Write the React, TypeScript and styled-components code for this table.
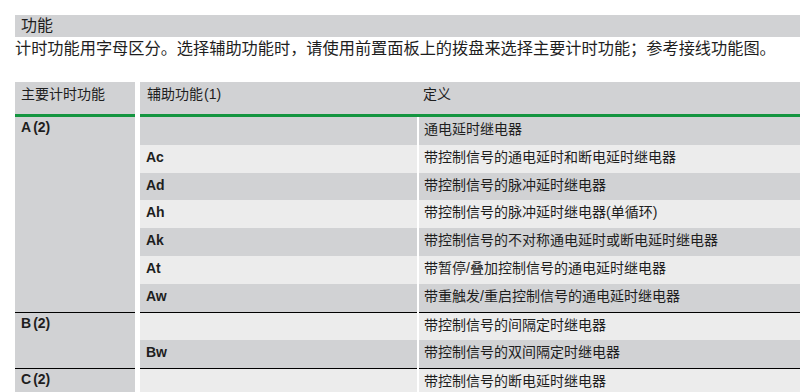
import React from 'react';
import styled, { createGlobalStyle } from 'styled-components';

const GlobalStyle = createGlobalStyle`
  html, body {
    margin: 0;
    padding: 0;
    background: #ffffff;
    overflow: hidden;
  }
  body {
    font-family: "Liberation Sans", "Noto Sans CJK SC", sans-serif;
    color: #1e1e1e;
  }
`;

const GRAY = '#d1d2d4';
const LIGHT = '#ececec';
const GREEN = '#149540';
const RULE = '#000000';

const Page = styled.div`
  padding: 15px 0 0 15px;
`;

const TitleBar = styled.div`
  background: ${GRAY};
  height: 22px;
  line-height: 22px;
  padding-left: 6px;
  font-size: 16px;
`;

const Intro = styled.p`
  margin: 0 0 23px;
  font-size: 16.2px;
  line-height: 22px;
  white-space: nowrap;
`;

const Table = styled.div`
  display: flex;
  flex-direction: column;
`;

const HeadRow = styled.div`
  display: flex;
  gap: 5px;
`;

const HeadMain = styled.div`
  flex: none;
  width: 120px;
  box-sizing: border-box;
  height: 35px;
  padding: 2px 0 0 6px;
  background: ${GRAY};
  border-bottom: 3px solid ${GREEN};
  font-size: 14px;
  line-height: 20px;
`;

const HeadRest = styled.div`
  flex: 1;
  display: grid;
  grid-template-columns: 277px 1fr;
  column-gap: 2px;
  box-sizing: border-box;
  height: 35px;
  padding-top: 2px;
  background: ${GRAY};
  border-bottom: 3px solid ${GREEN};
  font-size: 14px;
  line-height: 20px;
`;

const HeadLabel = styled.span<{ $pad: number }>`
  padding-left: ${(p) => p.$pad}px;
`;

const Note = styled.span`
  margin-left: 1px;
`;

const Group = styled.div`
  display: flex;
  gap: 5px;
`;

const MainCell = styled.div<{ $rule: boolean }>`
  flex: none;
  width: 120px;
  box-sizing: border-box;
  padding-left: 6px;
  background: ${GRAY};
  border-top: ${(p) => (p.$rule ? `1px solid ${RULE}` : 'none')};
  font-size: 14px;
  line-height: 20px;
  font-weight: 700;
`;

const MainNote = styled.span`
  margin-left: 2px;
`;

const SubList = styled.div`
  flex: 1;
  display: flex;
  flex-direction: column;
`;

const SubRow = styled.div`
  display: grid;
  grid-template-columns: 277px 1fr;
  column-gap: 2px;
`;

const Cell = styled.div<{ $tone: 'dark' | 'light'; $rule: boolean }>`
  height: 27.8px;
  background: ${(p) => (p.$tone === 'dark' ? GRAY : LIGHT)};
  border-top: ${(p) => (p.$rule ? `1px solid ${RULE}` : 'none')};
  font-size: 14px;
  line-height: 25px;
  white-space: nowrap;
`;

const AuxCell = styled(Cell)`
  padding-left: 6px;
  font-weight: 700;
`;

const DefCell = styled(Cell)`
  padding-left: 5px;
`;

type Sub = { code: string; def: string };
type GroupData = { key: string; subs: Sub[]; startDark: boolean };

const groups: GroupData[] = [
  {
    key: 'A',
    startDark: true,
    subs: [
      { code: '', def: '通电延时继电器' },
      { code: 'Ac', def: '带控制信号的通电延时和断电延时继电器' },
      { code: 'Ad', def: '带控制信号的脉冲延时继电器' },
      { code: 'Ah', def: '带控制信号的脉冲延时继电器(单循环)' },
      { code: 'Ak', def: '带控制信号的不对称通电延时或断电延时继电器' },
      { code: 'At', def: '带暂停/叠加控制信号的通电延时继电器' },
      { code: 'Aw', def: '带重触发/重启控制信号的通电延时继电器' },
    ],
  },
  {
    key: 'B',
    startDark: false,
    subs: [
      { code: '', def: '带控制信号的间隔定时继电器' },
      { code: 'Bw', def: '带控制信号的双间隔定时继电器' },
    ],
  },
  {
    key: 'C',
    startDark: false,
    subs: [{ code: '', def: '带控制信号的断电延时继电器' }],
  },
];

export default function App() {
  return (
    <>
      <GlobalStyle />
      <Page>
        <TitleBar>功能</TitleBar>
        <Intro>
          计时功能用字母区分。选择辅助功能时，请使用前置面板上的拨盘来选择主要计时功能；参考接线功能图。
        </Intro>
        <Table>
          <HeadRow>
            <HeadMain>主要计时功能</HeadMain>
            <HeadRest>
              <HeadLabel $pad={7}>
                辅助功能<Note>(1)</Note>
              </HeadLabel>
              <HeadLabel $pad={4}>定义</HeadLabel>
            </HeadRest>
          </HeadRow>
          {groups.map((g, gi) => (
            <Group key={g.key}>
              <MainCell $rule={gi > 0}>
                {g.key}
                <MainNote>(2)</MainNote>
              </MainCell>
              <SubList>
                {g.subs.map((s, si) => {
                  const dark = (si % 2 === 0) === g.startDark;
                  const tone = dark ? 'dark' : 'light';
                  const rule = gi > 0 && si === 0;
                  return (
                    <SubRow key={si}>
                      <AuxCell $tone={tone} $rule={rule}>
                        {s.code}
                      </AuxCell>
                      <DefCell $tone={tone} $rule={rule}>
                        {s.def}
                      </DefCell>
                    </SubRow>
                  );
                })}
              </SubList>
            </Group>
          ))}
        </Table>
      </Page>
    </>
  );
}
